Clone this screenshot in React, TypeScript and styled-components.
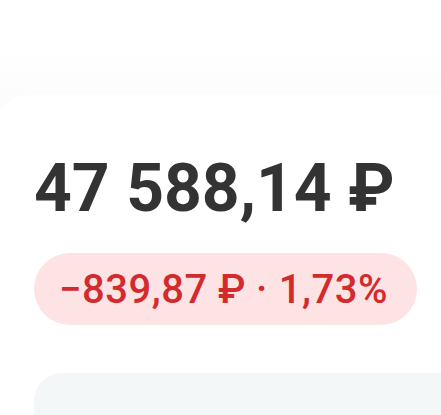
import React from 'react';
import styled, { createGlobalStyle } from 'styled-components';

const GlobalStyle = createGlobalStyle`
  html, body {
    margin: 0;
    padding: 0;
    background: #ffffff;
  }
  body {
    font-family: Roboto, "Noto Sans", "Liberation Sans", sans-serif;
    -webkit-font-smoothing: antialiased;
  }
`;

const Screen = styled.div`
  width: 441px;
  height: 415px;
  overflow: hidden;
  background: #ffffff;
`;

const StatusGap = styled.div`
  height: 45px;
`;

const Backdrop = styled.div`
  padding-top: 50px;
  background: linear-gradient(to bottom, #ffffff 0%, #f6f6f6 40%, #efefef 100%);
`;

const BalanceCard = styled.section`
  margin-left: -16px;
  margin-right: -80px;
  padding: 61px 0 0 50px;
  height: 400px;
  box-sizing: border-box;
  background: #ffffff;
  border-radius: 48px 48px 0 0;
`;

const Amount = styled.div`
  font-size: 66px;
  line-height: 66px;
  font-weight: 700;
  color: #333333;
  white-space: nowrap;
`;

const ChangePill = styled.div<{ $negative?: boolean }>`
  display: inline-flex;
  align-items: center;
  height: 72px;
  margin-top: 31px;
  padding: 0 29px 0 25px;
  border-radius: 36px;
  background: ${({ $negative }) => ($negative ? '#fde3e3' : '#e1f5e6')};
  color: ${({ $negative }) => ($negative ? '#d32a2e' : '#1f9d48')};
  font-size: 40px;
  font-weight: 500;
  letter-spacing: 0.5px;
  white-space: nowrap;
`;

const Dot = styled.span`
  margin: 0 11px 0 10px;
`;

const NextCard = styled.div`
  margin-top: 48px;
  height: 80px;
  border-radius: 28px 0 0 0;
  background: #f4f7f7;
`;

export default function App() {
  return (
    <Screen>
      <GlobalStyle />
      <StatusGap />
      <Backdrop>
        <BalanceCard>
          <Amount>47 588,14 ₽</Amount>
          <ChangePill $negative>
            −839,87 ₽<Dot>·</Dot>1,73%
          </ChangePill>
          <NextCard />
        </BalanceCard>
      </Backdrop>
    </Screen>
  );
}
